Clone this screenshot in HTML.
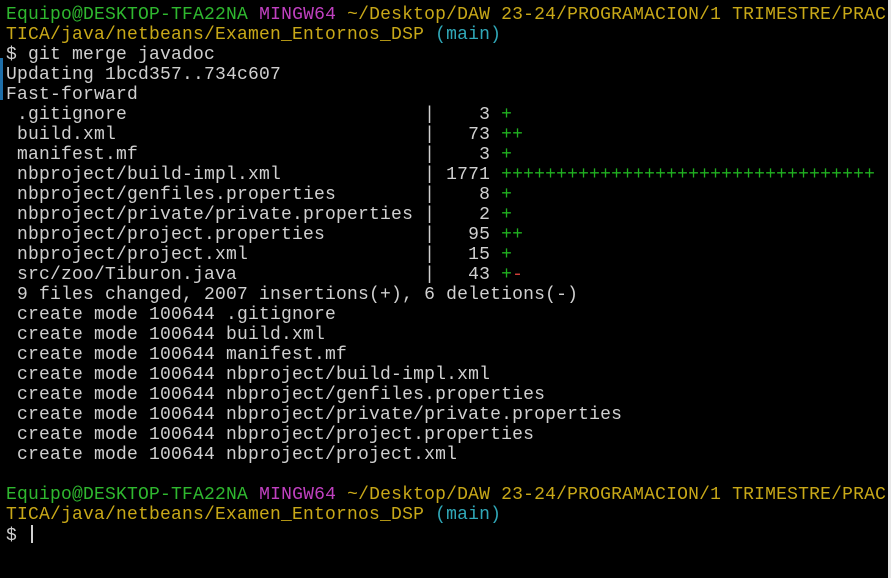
<!DOCTYPE html>
<html><head><meta charset="utf-8"><style>
html,body{margin:0;padding:0;background:#000;width:891px;height:578px;overflow:hidden;position:relative}
pre{margin:0;position:absolute;left:6px;top:5px;font-family:"Liberation Mono",monospace;font-size:18px;letter-spacing:0.2px;line-height:20px;color:#d0d0d0}
.g{color:#2fb82f}.p{color:#c040c0}.y{color:#c8a818}.c{color:#30a8b8}.a{color:#20b020}.r{color:#d04038}
.bl{position:absolute;left:0;top:58px;width:3px;height:42px;background:#1e6ea8}
.wr{position:absolute;right:0;top:0;width:3px;height:578px;background:#e8e8e8}
.cur{display:inline-block;width:2px;height:18px;background:#d0d0d0;vertical-align:-3px;margin-left:-8px}
</style></head><body>
<div class="bl"></div>
<pre><span class="g">Equipo@DESKTOP-TFA22NA</span> <span class="p">MINGW64</span> <span class="y">~/Desktop/DAW 23-24/PROGRAMACION/1 TRIMESTRE/PRAC
TICA/java/netbeans/Examen_Entornos_DSP</span> <span class="c">(main)</span>
$ git merge javadoc
Updating 1bcd357..734c607
Fast-forward
 .gitignore                           |    3 <span class="a">+</span>
 build.xml                            |   73 <span class="a">++</span>
 manifest.mf                          |    3 <span class="a">+</span>
 nbproject/build-impl.xml             | 1771 <span class="a">++++++++++++++++++++++++++++++++++</span>
 nbproject/genfiles.properties        |    8 <span class="a">+</span>
 nbproject/private/private.properties |    2 <span class="a">+</span>
 nbproject/project.properties         |   95 <span class="a">++</span>
 nbproject/project.xml                |   15 <span class="a">+</span>
 src/zoo/Tiburon.java                 |   43 <span class="a">+</span><span class="r">-</span>
 9 files changed, 2007 insertions(+), 6 deletions(-)
 create mode 100644 .gitignore
 create mode 100644 build.xml
 create mode 100644 manifest.mf
 create mode 100644 nbproject/build-impl.xml
 create mode 100644 nbproject/genfiles.properties
 create mode 100644 nbproject/private/private.properties
 create mode 100644 nbproject/project.properties
 create mode 100644 nbproject/project.xml

<span class="g">Equipo@DESKTOP-TFA22NA</span> <span class="p">MINGW64</span> <span class="y">~/Desktop/DAW 23-24/PROGRAMACION/1 TRIMESTRE/PRAC
TICA/java/netbeans/Examen_Entornos_DSP</span> <span class="c">(main)</span>
$  <span class="cur"></span></pre>
<div class="wr"></div>
</body></html>
